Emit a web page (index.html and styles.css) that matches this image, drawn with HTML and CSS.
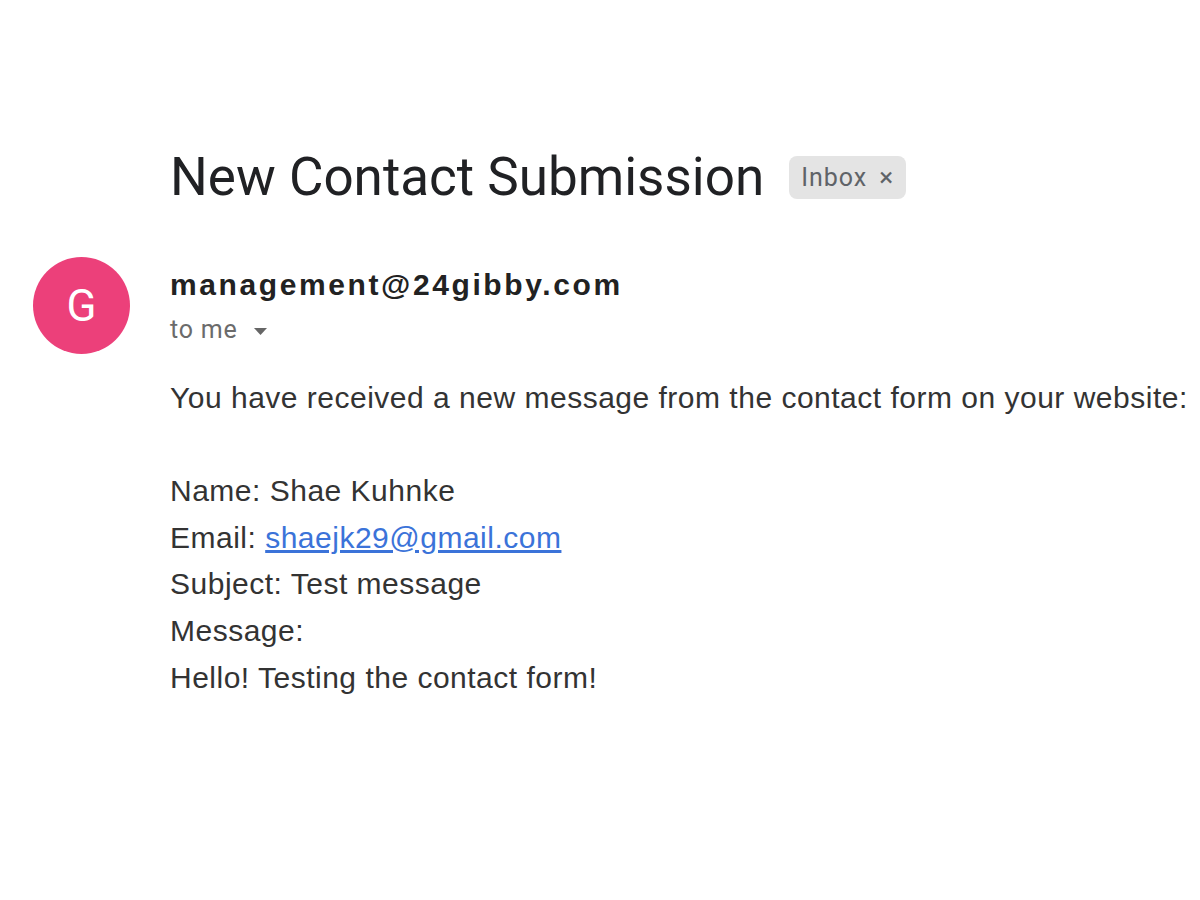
FILE: index.html
```html
<!DOCTYPE html>
<html>
<head>
<meta charset="utf-8">
<link rel="stylesheet" href="styles.css">
</head>
<body>
<div class="page">
  <div class="subject-row">
    <h1 class="subject">New Contact Submission</h1>
    <span class="chip">Inbox <span class="chip-x">×</span></span>
  </div>
  <div class="message">
    <div class="avatar">G</div>
    <div class="content">
      <div class="sender">management@24gibby.com</div>
      <div class="to">to me <svg class="caret" width="13" height="7" viewBox="0 0 13 7"><path d="M0 0h13L6.5 7z" fill="#666"/></svg></div>
      <div class="body">
        <p>You have received a new message from the contact form on your website:</p>
        <p class="blank">&nbsp;</p>
        <p>Name: Shae Kuhnke</p>
        <p>Email: <a class="link" href="#">shaejk29@gmail.com</a></p>
        <p>Subject: Test message</p>
        <p>Message:</p>
        <p>Hello! Testing the contact form!</p>
      </div>
    </div>
  </div>
</div>
</body>
</html>
```
FILE: styles.css
```css
html, body {
  margin: 0;
  padding: 0;
  background: #ffffff;
}
.page {
  padding: 150px 0 0 33px;
  font-family: Roboto, "Liberation Sans", sans-serif;
}
.subject-row {
  display: flex;
  align-items: center;
  gap: 25px;
  padding-left: 137px;
}
.subject {
  margin: 0;
  font-family: Roboto, "Liberation Sans", sans-serif;
  font-weight: 400;
  font-size: 53px;
  line-height: 54px;
  color: #202124;
}
.chip {
  display: inline-flex;
  align-items: center;
  height: 43px;
  padding: 0 12px;
  background: #e4e4e4;
  border-radius: 8px;
  font-size: 25px;
  letter-spacing: 1px;
  color: #5f6368;
  gap: 12px;
}
.chip-x {
  font-size: 26px;
  color: #5f6368;
}
.message {
  display: flex;
  gap: 40px;
  margin-top: 53px;
}
.avatar {
  flex: none;
  width: 97px;
  height: 97px;
  border-radius: 50%;
  background: #ec407a;
  color: #fff;
  font-size: 44px;
  display: flex;
  align-items: center;
  justify-content: center;
}
.content {
  padding-top: 9px;
}
.sender {
  font-family: "Liberation Sans", Arial, sans-serif;
  font-weight: 700;
  font-size: 30px;
  letter-spacing: 2.6px;
  line-height: 38px;
  color: #222222;
}
.to {
  margin-top: 6px;
  font-size: 25px;
  letter-spacing: 0.8px;
  line-height: 40px;
  color: #6b6b6b;
  display: flex;
  align-items: center;
  gap: 16px;
}
.caret {
  margin-top: 2px;
}
.body {
  margin-top: 25px;
  font-family: "Liberation Sans", Arial, sans-serif;
  font-size: 30px;
  letter-spacing: 0.5px;
  line-height: 46.6px;
  color: #333333;
}
.body p {
  margin: 0;
  white-space: nowrap;
}
.link {
  color: #3b73d9;
  text-decoration: underline;
}
```
